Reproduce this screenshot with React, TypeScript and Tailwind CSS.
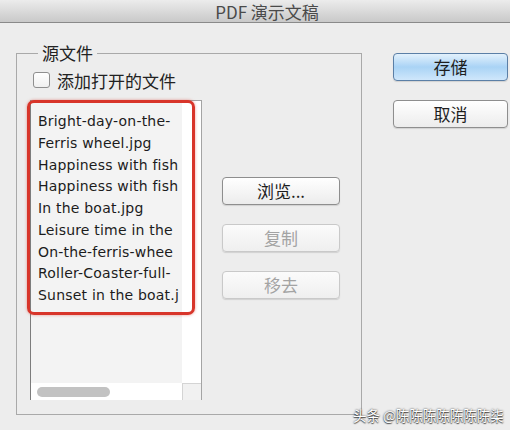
import React from "react";

// what the list shows before its edge
const files = [
  "Bright-day-on-the-",
  "Ferris wheel.jpg",
  "Happiness with fish",
  "Happiness with fish",
  "In the boat.jpg",
  "Leisure time in the",
  "On-the-ferris-whee",
  "Roller-Coaster-full-",
  "Sunset in the boat.j",
];

const cjk = "font-['Lucida_Grande','Noto_Sans_CJK_SC',sans-serif]";

function MacButton({ label, disabled, primary }: { label: string; disabled?: boolean; primary?: boolean }) {
  const tone = primary
    ? "border-[#5b7fa6] bg-gradient-to-b from-[#e3f1fc] via-[#a9d3f5] to-[#cfe7fb] text-[#1e1e1e]"
    : disabled
      ? "border-[#c9c9c9] bg-gradient-to-b from-[#fbfbfb] to-[#efefef] text-[#a3a3a3]"
      : "border-[#8e8e8e] bg-gradient-to-b from-[#ffffff] to-[#ececec] text-[#1e1e1e]";
  return (
    <div
      className={`flex h-[28px] items-center justify-center rounded-[4px] border text-[17px] shadow-[0_1px_1px_rgba(0,0,0,0.12)] ${tone}`}
    >
      {label}
    </div>
  );
}

export default function App() {
  return (
    <div className={`relative h-[430px] w-[510px] overflow-hidden bg-[#ededed] ${cjk}`}>
      <div className="flex h-[23px] items-center justify-center border-b border-[#8a8a8a] bg-gradient-to-b from-[#ececec] to-[#c9c9c9] pl-[24px] text-[17px] leading-none text-[#4a4a4a]">
        PDF 演示文稿
      </div>

      <div className="flex pl-[16px] pt-[30px]">
        {/* 源文件 group */}
        <div className="relative h-[362px] w-[346px] border border-[#a9a9a9]">
          <span className="absolute left-[21px] top-[-12px] bg-[#ededed] px-[4px] text-[17px] leading-[22px] text-[#222]">
            源文件
          </span>

          <div className="pl-[13px] pt-[18px]">
            <div className="ml-[3px] flex h-[16px] items-center gap-[7px]">
              <div className="h-[16px] w-[17px] rounded-[3px] border border-[#8f8f8f] bg-gradient-to-b from-white to-[#f0f0f0]" />
              <span className="text-[17px] leading-none text-[#222]">添加打开的文件</span>
            </div>

            <div className="mt-[12px] flex">
              {/* file list */}
              <div className="relative flex h-[300px] w-[172px] flex-col border-l border-r border-t border-l-[#7c7c7c] border-r-[#a4a4a4] border-t-[#a4a4a4] bg-white">
                <div className="flex flex-1">
                  <div className="w-[151px] overflow-hidden bg-[#f3f3f3] pl-[7px] pt-[10px] font-['DejaVu_Sans',sans-serif] text-[14px] leading-[21.75px] tracking-[0.2px] text-[#1c1c1c]">
                    {files.map((f, i) => (
                      <div key={i} className="whitespace-nowrap">
                        {f}
                      </div>
                    ))}
                  </div>
                  <div className="flex-1 bg-white" />
                </div>
                <div className="flex h-[17px]">
                  <div className="flex w-[151px] items-center bg-white pl-[6px]">
                    <div className="h-[10px] w-[73px] rounded-full bg-[#c2c2c2]" />
                  </div>
                  <div className="flex-1 border-l border-t border-[#d4d4d4] bg-[#f1f1f1]" />
                </div>

                {/* red annotation */}
                <div className="absolute left-[-4px] top-[-1px] h-[215px] w-[168px] rounded-[7px] border-[3px] border-[#d8352a] shadow-[0_0_3px_rgba(216,53,42,0.5)]" />
              </div>

              <div className="ml-[20px] flex w-[118px] flex-col gap-[19px] pt-[77px]">
                <MacButton label="浏览..." />
                <MacButton label="复制" disabled />
                <MacButton label="移去" disabled />
              </div>
            </div>
          </div>
        </div>

        <div className="ml-[31px] flex w-[115px] flex-col gap-[19px]">
          <MacButton label="存储" primary />
          <MacButton label="取消" />
        </div>
      </div>

      <div className="absolute left-[353px] top-[406px] text-[13.5px] leading-[18px] text-white [text-shadow:0_0_2px_rgba(0,0,0,0.85),0_1px_1px_rgba(0,0,0,0.6)]">
        头条 @陈陈陈陈陈陈陈柒
      </div>
    </div>
  );
}
